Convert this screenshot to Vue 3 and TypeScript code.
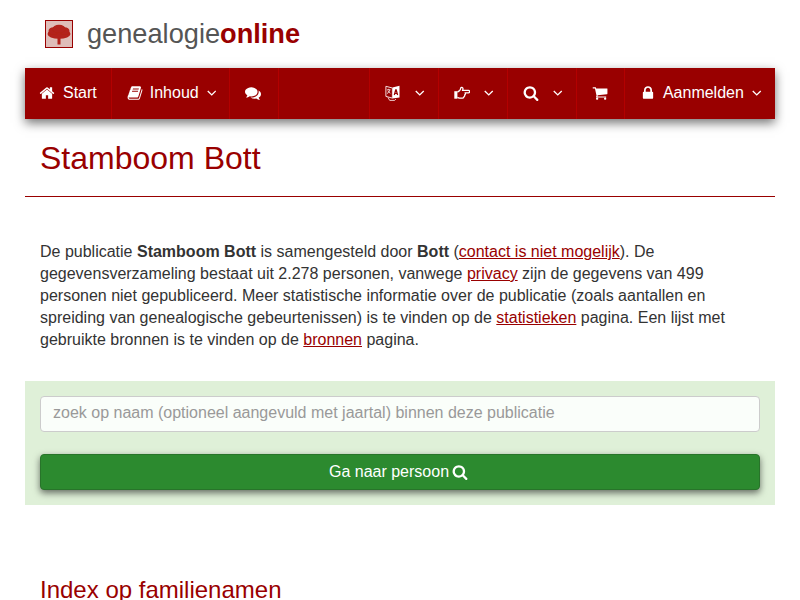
<script setup lang="ts">
const searchPath = 'M1216 832q0-185-131.5-316.5t-316.5-131.5-316.5 131.5-131.5 316.5 131.5 316.5 316.5 131.5 316.5-131.5 131.5-316.5zm512 832q0 52-38 90t-90 38q-54 0-90-38l-343-342q-179 124-399 124-143 0-273.5-55.5t-225-150-150-225-55.5-273.5 55.5-273.5 150-225 225-150 273.5-55.5 273.5 55.5 225 150 150 225 55.5 273.5q0 220-124 399l343 343q37 37 37 90z'
</script>

<template>
  <div class="page">
    <header class="brand">
      <svg class="logo" viewBox="0 0 28 28" aria-hidden="true">
        <defs><filter id="soft" x="-20%" y="-20%" width="140%" height="140%"><feGaussianBlur stdDeviation="0.7" /></filter></defs>
        <rect x="0.5" y="0.5" width="27" height="27" fill="#dfbdb9" stroke="#990000" />
        <g filter="url(#soft)" fill="#b3221a">
          <ellipse cx="14" cy="14" rx="11.500" ry="4.800" />
          <ellipse cx="8.500" cy="11" rx="5" ry="3.800" />
          <ellipse cx="19.500" cy="11" rx="5" ry="3.800" />
          <ellipse cx="14" cy="8.800" rx="6.500" ry="4" />
          <rect x="12.500" y="15" width="3" height="9.500" />
        </g>
      </svg>
      <div class="wordmark">genealogie<b>online</b></div>
    </header>

    <nav class="nav">
      <a class="item w-start">
        <svg class="ico" viewBox="0 0 1792 1792"><path d="M1472 992v480q0 26-19 45t-45 19h-384v-384h-256v384h-384q-26 0-45-19t-19-45v-480q0-1 .5-3t.5-3l575-474 575 474q1 2 1 6zm223-69l-62 74q-8 9-21 11h-3q-13 0-21-7l-692-577-692 577q-12 8-24 7-13-2-21-11l-62-74q-8-10-7-23.5t11-21.5l719-599q32-26 76-26t76 26l244 204v-195q0-14 9-23t23-9h192q14 0 23 9t9 23v408l219 182q10 8 11 21.5t-7 23.5z" /></svg>
        <span>Start</span>
      </a>
      <a class="item w-inhoud">
        <svg class="ico" viewBox="0 0 1792 1792"><path d="M1703 478q40 57 18 129l-275 906q-19 64-76.5 107.5t-122.5 43.5h-923q-77 0-148.5-53.5t-99.5-131.5q-24-67-2-127 0-4 3-27t4-37q1-8-3-21.5t-3-19.5q2-11 8-21t16.5-23.5 16.5-23.5q23-38 45-91.5t30-91.5q3-10 .5-30t-.5-28q3-11 17-28t17-23q21-36 42-92t25-90q1-9-2.5-32t.5-28q4-13 22-30.5t22-22.5q19-26 42.5-84.5t27.5-96.5q1-8-3-25.5t-2-26.5q2-8 9-18t18-23 17-21q8-12 16.5-30.5t15-35 16-36 19.5-32 26.5-23.5 36-11.5 47.5 5.5l-1 3q38-9 51-9h761q74 0 114 56t18 130l-274 906q-36 119-71.5 153.5t-128.5 34.5h-869q-27 0-38 15-11 16-1 43 24 70 144 70h923q29 0 56-15.5t35-41.5l300-987q7-22 5-57 38 15 59 43zm-1064 2q-4 13 2 22.5t20 9.5h608q13 0 25.5-9.5t16.5-22.5l21-64q4-13-2-22.5t-20-9.5h-608q-13 0-25.5 9.5t-16.5 22.5zm-83 256q-4 13 2 22.5t20 9.5h608q13 0 25.5-9.5t16.5-22.5l21-64q4-13-2-22.5t-20-9.5h-608q-13 0-25.5 9.5t-16.5 22.5z" /></svg>
        <span class="tight">Inhoud</span>
        <svg class="chev" viewBox="0 0 10 6"><path d="M.8.8 5 5l4.2-4.2" /></svg>
      </a>
      <a class="item w-chat">
        <svg class="ico" viewBox="0 0 1792 1792"><path d="M1408 768q0 139-94 257t-256.5 186.5-353.5 68.5q-86 0-176-16-124 88-278 128-36 9-86 16h-3q-11 0-20.5-8t-11.5-21q-1-3-1-6.5t.5-6.5 2-6l2.5-5 3.5-5.5 4-5 4.5-5 4-4.5q5-6 23-25t26-29.5 22.5-29 25-38.5 20.5-44q-124-72-195-177t-71-224q0-139 94-257t256.5-186.5 353.5-68.5 353.5 68.5 256.5 186.5 94 257zm384 256q0 120-71 224.5t-195 176.5q10 24 20.5 44t25 38.5 22.5 29 26 29.5 23 25q1 1 4 4.5t4.5 5 4 5 3.5 5.5l2.5 5 2 6 .5 6.5-1 6.5q-3 14-13 22t-22 7q-50-7-86-16-154-40-278-128-90 16-176 16-271 0-472-132 58 4 88 4 161 0 309-45t264-129q125-92 192-212t67-254q0-77-23-152 129 71 204 178t75 230z" /></svg>
      </a>
      <div class="spacer"></div>
      <a class="item w-icon">
        <svg class="lang" viewBox="0 0 15 16"><path class="fill" d="M7.400 2.400 14.500 0.700v11.700l-7.100 1.200z" /><path class="page-left" d="M.9 1.300 7.400 3v10.100L.9 11.400z" /><path class="cut" d="M9.300 10l1.400-5.200h.5l1.400 5.200M9.900 8.300h2.300" /><path class="line" d="M2 4.800h3.400M3.700 3.800v1M4.800 4.800c-.3 1.600-1.200 3-2.800 3.700M2.900 5.800c.5 1.100 1.300 1.900 2.500 2.400" /><path class="line" d="M3 12.400l1.700 3h5l1.300-1.400" /></svg>
        <svg class="chev" viewBox="0 0 10 6"><path d="M.8.8 5 5l4.2-4.2" /></svg>
      </a>
      <a class="item w-icon">
        <svg class="hand" viewBox="0 0 16 13"><path class="fill" d="M.3 5.200h3.100v7.500H.3z" /><path class="line hand-line" d="M3.400 6c1.700-.3 3-1.700 3.400-4 .2-1 2.200-1 2.200.8 0 .6-.2 1-.4 1.600h5.900c1.500 0 1.500 2.400 0 2.400h-3.200c.3 1.100 0 1.800-.6 2.200.2.900-.2 1.500-.8 1.800 0 .9-.6 1.400-1.400 1.400H6.100c-1 0-1.700-.6-2.700-.8" /></svg>
        <svg class="chev" viewBox="0 0 10 6"><path d="M.8.8 5 5l4.2-4.2" /></svg>
      </a>
      <a class="item w-icon">
        <svg class="ico" viewBox="0 0 1792 1792"><path :d="searchPath" /></svg>
        <svg class="chev" viewBox="0 0 10 6"><path d="M.8.8 5 5l4.2-4.2" /></svg>
      </a>
      <a class="item w-cart">
        <svg class="ico" viewBox="0 0 1792 1792"><path d="M704 1536q0 52-38 90t-90 38-90-38-38-90 38-90 90-38 90 38 38 90zm896 0q0 52-38 90t-90 38-90-38-38-90 38-90 90-38 90 38 38 90zm128-1088v512q0 24-16.5 42.5t-40.5 21.5l-1044 122q13 60 13 70 0 16-24 64h920q26 0 45 19t19 45-19 45-45 19h-1024q-26 0-45-19t-19-45q0-11 8-31.5t16-36 21.5-40 15.5-29.5l-177-823h-204q-26 0-45-19t-19-45 19-45 45-19h256q16 0 28.5 6.5t19.5 15.5 13 24.5 8 26 5.5 29.5 4.5 26h1201q26 0 45 19t19 45z" /></svg>
      </a>
      <a class="item w-login">
        <svg class="ico" viewBox="0 0 1792 1792"><path d="M640 768h512v-192q0-106-75-181t-181-75-181 75-75 181v192zm832 96v576q0 40-28 68t-68 28h-960q-40 0-68-28t-28-68v-576q0-40 28-68t68-28h32v-192q0-184 132-316t316-132 316 132 132 316v192h32q40 0 68 28t28 68z" /></svg>
        <span class="login">Aanmelden</span>
        <svg class="chev" viewBox="0 0 10 6"><path d="M.8.8 5 5l4.2-4.2" /></svg>
      </a>
    </nav>

    <h1>Stamboom Bott</h1>
    <hr />

    <p class="intro">
      De publicatie <b>Stamboom Bott</b> is samengesteld door <b>Bott</b> (<a>contact is niet mogelijk</a>). De gegevensverzameling bestaat uit 2.278 personen, vanwege <a>privacy</a> zijn de gegevens van 499 personen niet gepubliceerd. Meer statistische informatie over de publicatie (zoals aantallen en spreiding van genealogische gebeurtenissen) is te vinden op de <a>statistieken</a> pagina. Een lijst met gebruikte bronnen is te vinden op de <a>bronnen</a> pagina.
    </p>

    <form class="search" @submit.prevent>
      <input type="text" placeholder="zoek op naam (optioneel aangevuld met jaartal) binnen deze publicatie" />
      <button type="submit">
        Ga naar persoon
        <svg viewBox="0 0 1792 1792"><path :d="searchPath" /></svg>
      </button>
    </form>

    <h2>Index op familienamen</h2>
  </div>
</template>

<style>
html, body { margin: 0; height: 100%; overflow: hidden; background: #fff; }
</style>

<style scoped>
.page {
  box-sizing: border-box;
  width: 800px;
  height: 600px;
  overflow: hidden;
  padding: 0 25px;
  font-family: "Liberation Sans", Arial, sans-serif;
  font-size: 16px;
  line-height: 22px;
  color: #333;
}
.brand { display: flex; align-items: center; height: 68px; padding-left: 20px; }
.logo { width: 28px; height: 28px; margin-right: 14px; flex: none; }
.wordmark { font-size: 27.2px; line-height: 34px; color: #555; }
.wordmark b { color: #990000; }
.nav {
  display: flex;
  height: 51px;
  background: #990000;
  box-shadow: 0 4px 10px rgba(0, 0, 0, .55);
  color: #fff;
}
.item {
  box-sizing: border-box;
  display: flex;
  align-items: center;
  height: 100%;
  padding: 0 0 2px 15px;
  border-right: 1px solid #b30000;
}
.w-start { width: 87px; padding-left: 14px; }
.w-inhoud { width: 119px; }
.w-chat { width: 49px; }
.w-icon { width: 69px; }
.w-cart { width: 49px; }
.w-login { width: 150px; border-right: 0; }
.spacer { width: 90px; border-right: 1px solid #b30000; }
.item span { margin-left: 8px; }
.item span.tight { margin-left: 7px; }
.item span.login { margin-left: 6.500px; }
.ico { width: 16px; height: 16px; fill: #fff; flex: none; }
.chev { width: 9.500px; height: 6px; margin-left: auto; margin-right: 13px; fill: none; stroke: #fff; stroke-width: 1.4; flex: none; }
.lang { width: 15px; height: 16px; flex: none; }
.hand { width: 16px; height: 13px; flex: none; }
.fill { fill: #fff; }
.page-left { fill: #990000; stroke: #f2dcdc; stroke-width: 1; }
.cut { fill: none; stroke: #990000; stroke-width: 1.2; }
.line { fill: none; stroke: #f2dcdc; stroke-width: .9; }
.hand-line { stroke: #fff; stroke-width: 1.3; }
h1 {
  margin: 0;
  padding: 22px 15px 0;
  height: 55px;
  font-size: 32px;
  line-height: 35px;
  font-weight: 400;
  color: #990000;
}
hr { margin: 0; border: 0; border-top: 1px solid #990000; }
.intro { margin: 44px 0 0; padding: 0 15px; height: 110px; }
.intro a { color: #990000; text-decoration: underline; }
.search {
  box-sizing: border-box;
  height: 124px;
  margin-top: 30px;
  padding: 15px 15px 0;
  background: #dff0d8;
}
.search input {
  display: block;
  box-sizing: border-box;
  width: 100%;
  height: 36px;
  padding: 0 12px 2px;
  border: 1px solid #ccc;
  border-radius: 4px;
  background: #fafefa;
  font: 16px/22px "Liberation Sans", Arial, sans-serif;
  color: #333;
}
.search input::placeholder { color: #999; opacity: 1; }
.search button {
  display: flex;
  justify-content: center;
  align-items: center;
  gap: 3px;
  box-sizing: border-box;
  width: 100%;
  height: 36px;
  margin-top: 22px;
  border: 1px solid #28742a;
  border-radius: 4px;
  background: #2c8a2f;
  box-shadow: 0 3px 7px rgba(0, 0, 0, .55);
  color: #fff;
  font: 16px/22px "Liberation Sans", Arial, sans-serif;
}
.search button svg { width: 16px; height: 16px; fill: #fff; margin-right: 3px; }
h2 {
  margin: 72px 0 0;
  padding: 0 15px;
  font-size: 24px;
  line-height: 25px;
  font-weight: 400;
  color: #990000;
}
</style>
